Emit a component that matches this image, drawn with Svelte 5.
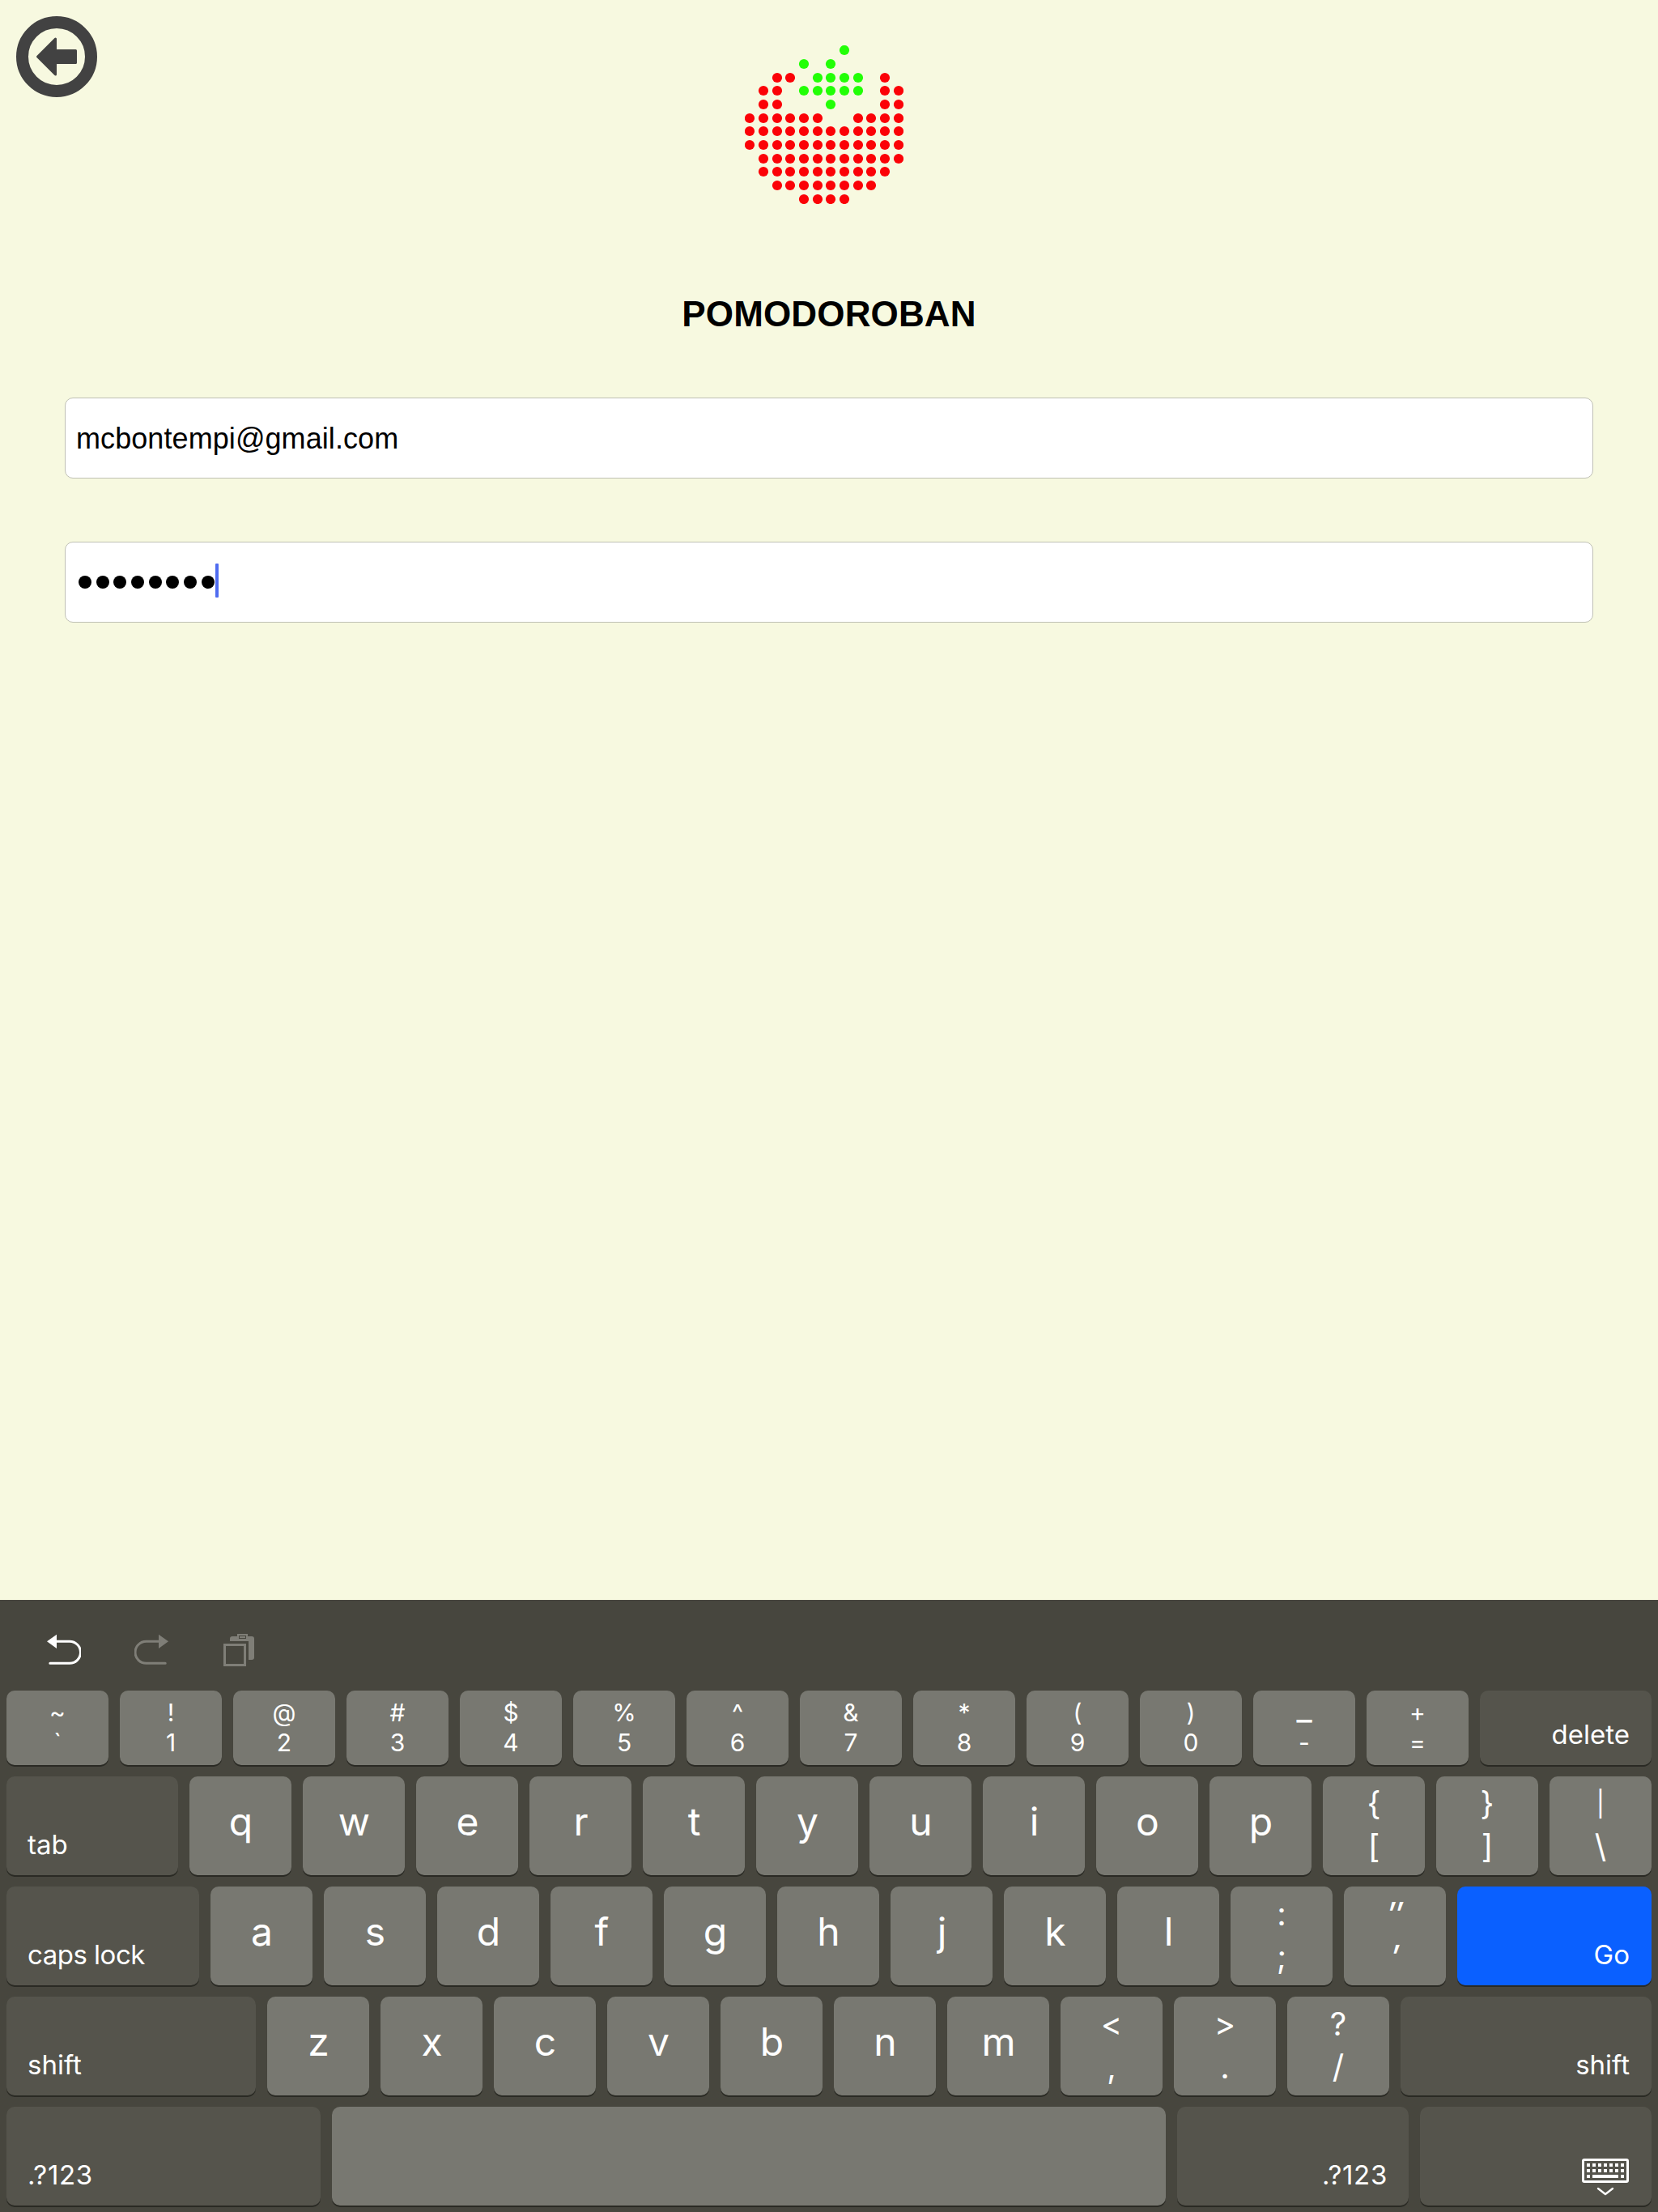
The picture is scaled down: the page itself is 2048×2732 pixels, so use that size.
<script>
  // Distance of each logo column / row from the first one
  const steps = [0, 17, 34, 50, 67, 84, 100, 117, 134, 150, 167, 184];

  // r = fruit, g = leaf
  const tomato = [
    '.......g....',
    '....g.g.....',
    '..rr.gggg.r.',
    '.rr.ggggg.rr',
    '.rr...g...rr',
    'rrrrrr..rrrr',
    'rrrrrrrrrrrr',
    'rrrrrrrrrrrr',
    '.rrrrrrrrrrr',
    '.rrrrrrrrrr.',
    '..rrrrrrrr..',
    '....rrrr....',
  ];
  const dots = tomato.flatMap((row, y) =>
    [...row].flatMap((c, x) => (c === '.' ? [] : [{ x: steps[x] + 6, y: steps[y] + 6, leaf: c === 'g' }]))
  );

  const letters = (s) => [...s].map((c) => ({ type: 'letter', label: c }));
  const pair = (top, bottom, kind = '') => ({ type: 'pair', top, bottom, kind });

  const rows = [
    [
      pair('~', '`'), pair('!', '1'), pair('@', '2'), pair('#', '3'), pair('$', '4'),
      pair('%', '5'), pair('^', '6'), pair('&', '7'), pair('*', '8'), pair('(', '9'),
      pair(')', '0'), pair('_', '-', 'underscore'), pair('+', '='),
      { type: 'fn', label: 'delete', side: 'right', size: 'grow' },
    ],
    [
      { type: 'fn', label: 'tab', side: 'left', size: 'grow' },
      ...letters('qwertyuiop'),
      pair('{', '['), pair('}', ']'), pair('|', '\\', 'bar'),
    ],
    [
      { type: 'fn', label: 'caps lock', side: 'left', size: 'caps' },
      ...letters('asdfghjkl'),
      pair(':', ';'), pair('″', '′', 'quotes'),
      { type: 'fn', label: 'Go', side: 'right', size: 'grow', go: true },
    ],
    [
      { type: 'fn', label: 'shift', side: 'left', size: 'shift' },
      ...letters('zxcvbnm'),
      pair('<', ','), pair('>', '.'), pair('?', '/'),
      { type: 'fn', label: 'shift', side: 'right', size: 'grow' },
    ],
    [
      { type: 'fn', label: '.?123', side: 'left', size: 'mode' },
      { type: 'space' },
      { type: 'fn', label: '.?123', side: 'right', size: 'mode-right' },
      { type: 'hide' },
    ],
  ];

  const keyCols = [6, 13, 20, 27, 34, 41, 48];
</script>

<div class="screen">
  <main>
    <button class="back" aria-label="Back">
      <svg width="100" height="100" viewBox="0 0 100 100">
        <circle cx="50" cy="50" r="42.5" fill="none" stroke="#424242" stroke-width="15" />
        <path d="M26.5 50 L48.5 28 V42.5 H73.5 V57.5 H48.5 V72 Z" fill="#424242" stroke="#424242" stroke-width="3" stroke-linejoin="round" />
      </svg>
    </button>

    <svg class="logo" width="196" height="196" viewBox="0 0 196 196">
      {#each dots as d}
        <circle cx={d.x} cy={d.y} r="6.1" fill={d.leaf ? '#22ff06' : '#fb0207'} />
      {/each}
    </svg>

    <h1>POMODOROBAN</h1>

    <div class="field email">mcbontempi@gmail.com</div>
    <div class="field password">
      {#each Array(8) as _}<i class="bullet"></i>{/each}
      <i class="caret"></i>
    </div>
  </main>

  <section class="keyboard">
    <div class="toolbar">
      <svg width="42" height="40" viewBox="0 0 42 40">
        <path d="M0 9.3 L12 .8 V18 Z" fill="#fff" />
        <path d="M11 9.3 H28 a13.5 13.5 0 0 1 0 27 H3.8" fill="none" stroke="#fff" stroke-width="3" stroke-linecap="round" />
      </svg>
      <svg width="42" height="40" viewBox="0 0 42 40">
        <path d="M42 9.3 L30 .8 V18 Z" fill="#7f7e77" />
        <path d="M31 9.3 H14.5 a13.5 13.5 0 0 0 0 27 H38.2" fill="none" stroke="#7f7e77" stroke-width="3" stroke-linecap="round" />
      </svg>
      <svg width="38" height="40" viewBox="0 0 38 40">
        <path d="M8 9 V6 a3 3 0 0 1 3 -3 H17 V0 H30 V3 H35 a3 3 0 0 1 3 3 V29 a3 3 0 0 1 -3 3 H31 V9 Z" fill="#7f7e77" />
        <rect x="19.5" y="2.5" width="8" height="3" fill="none" stroke="#47463e" stroke-width="1" />
        <rect x="1.5" y="13.5" width="25" height="25" fill="none" stroke="#7f7e77" stroke-width="3" />
      </svg>
    </div>

    {#each rows as row, r}
      <div class="row" class:numbers={r === 0}>
        {#each row as k}
          {#if k.type === 'letter'}
            <div class="key letter">{k.label}</div>
          {:else if k.type === 'pair'}
            <div class="key pair {k.kind}"><span class="upper">{k.top}</span><span>{k.bottom}</span></div>
          {:else if k.type === 'fn'}
            <div class="key fn {k.side} {k.size}" class:go={k.go}>{k.label}</div>
          {:else if k.type === 'space'}
            <div class="key space"></div>
          {:else}
            <div class="key fn hide">
              <svg width="58" height="46" viewBox="0 0 58 46">
                <rect x="1.5" y="1.5" width="55" height="27" rx="1.5" fill="none" stroke="#fff" stroke-width="3" />
                {#each keyCols as x}
                  <rect {x} y="6" width="4" height="4" fill="#fff" />
                  <rect {x} y="13" width="4" height="4" fill="#fff" />
                {/each}
                <rect x="6" y="20" width="4" height="4" fill="#fff" />
                <rect x="13" y="20" width="32" height="4" fill="#fff" />
                <rect x="48" y="20" width="4" height="4" fill="#fff" />
                <path d="M20 37 L29 44 L38 37" fill="none" stroke="#fff" stroke-width="2.4" stroke-linecap="round" stroke-linejoin="round" />
              </svg>
            </div>
          {/if}
        {/each}
      </div>
    {/each}
  </section>
</div>

<style>
  :global(body) {
    margin: 0;
    background: #f7f9e0;
  }
  .screen {
    width: 2048px;
    height: 2732px;
    display: flex;
    flex-direction: column;
    background: #f7f9e0;
    overflow: hidden;
  }
  main {
    position: relative;
    flex: 1;
    display: flex;
    flex-direction: column;
    align-items: center;
    padding: 56px 80px 0;
    font-family: 'Liberation Sans', Arial, sans-serif;
    color: #000;
  }
  .back {
    position: absolute;
    left: 20px;
    top: 20px;
    padding: 0;
    border: 0;
    background: none;
  }
  .back svg,
  .logo,
  .toolbar svg,
  .hide svg {
    display: block;
  }
  .logo {
    margin-right: 12px;
  }
  h1 {
    margin: 111px 0 0;
    height: 49px;
    line-height: 50px;
    font-size: 44px;
    font-weight: 700;
    letter-spacing: 0.15px;
  }
  .field {
    box-sizing: border-box;
    width: 100%;
    height: 100px;
    border: 1px solid #bfc0b4;
    border-radius: 10px;
    background: #fff;
    display: flex;
    align-items: center;
  }
  .email {
    margin-top: 79px;
    padding: 1px 0 0 13px;
    font-size: 36px;
    letter-spacing: 0.08px;
  }
  .password {
    margin-top: 78px;
    padding-left: 16px;
    gap: 5.7px;
  }
  .bullet {
    width: 16px;
    height: 16px;
    border-radius: 50%;
    background: #000;
  }
  .caret {
    width: 4px;
    height: 42px;
    margin: 0 0 4px -5px;
    border-radius: 1px;
    background: #4f6cf0;
  }

  .keyboard {
    height: 756px;
    background: #47463e;
    color: #fff;
    font-family: Inter, sans-serif;
  }
  .toolbar {
    box-sizing: border-box;
    height: 112px;
    padding: 42px 0 0 58px;
    display: flex;
    align-items: flex-start;
    gap: 66px;
  }
  .toolbar svg:last-child {
    margin-left: 2px;
  }
  .row {
    display: flex;
    gap: 14px;
    height: 122px;
    margin: 0 8px 14px;
  }
  .row.numbers {
    height: 92px;
  }
  .key {
    box-sizing: border-box;
    flex: none;
    width: 126px;
    border-radius: 10px;
    background: #787871;
    box-shadow: 0 2px 0 #2a2a24;
  }
  .letter {
    padding-left: 1px;
    font-size: 48px;
    line-height: 112px;
    text-align: center;
  }
  .pair {
    display: flex;
    flex-direction: column;
    align-items: center;
    padding-top: 7px;
    font-size: 40px;
    line-height: 53px;
  }
  .numbers .pair {
    padding-top: 9px;
    font-size: 30px;
    line-height: 37px;
  }
  .underscore .upper {
    height: 37px;
    font-size: 42px;
    line-height: 24px;
  }
  .bar .upper {
    font-size: 31px;
  }
  .quotes span {
    font-style: italic;
    font-weight: 500;
  }
  .fn {
    display: flex;
    align-items: flex-end;
    padding: 0 27px 18px 26px;
    background: #55544c;
    font-size: 33px;
    line-height: 40px;
  }
  .right,
  .hide {
    justify-content: flex-end;
  }
  .grow {
    flex: 1;
  }
  .caps {
    width: 238px;
    letter-spacing: -0.5px;
  }
  .shift {
    width: 308px;
  }
  .mode {
    width: 388px;
  }
  .mode-right {
    width: 286px;
    padding-right: 26px;
  }
  .mode,
  .mode-right {
    letter-spacing: 0.7px;
  }
  .space {
    flex: 1;
  }
  .hide {
    width: 286px;
    padding: 0 28px 12px 0;
  }
  .go {
    background: #0a60ff;
  }
</style>
